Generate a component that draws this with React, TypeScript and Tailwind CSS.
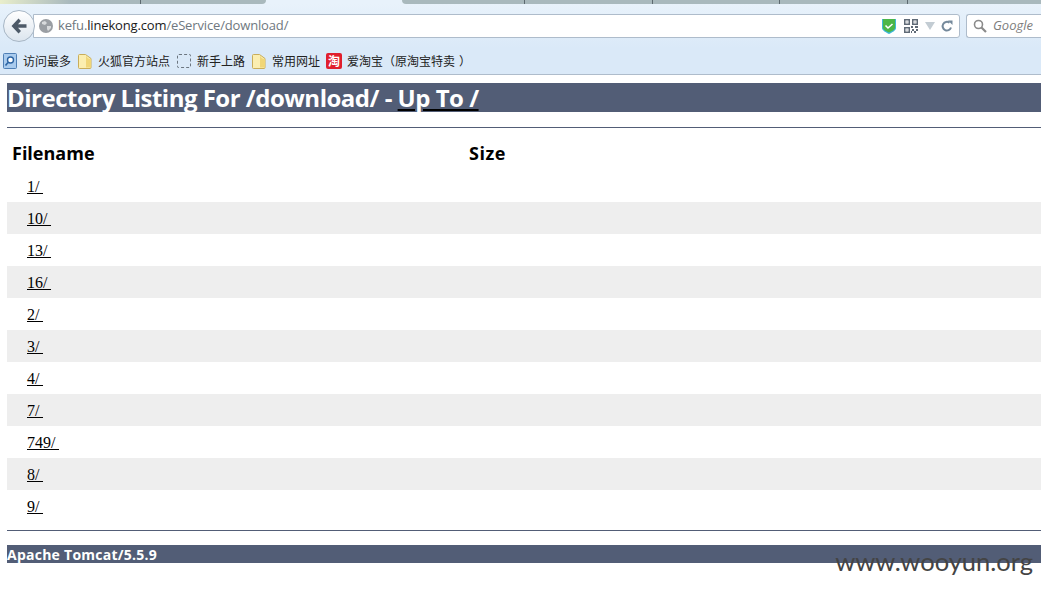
import React from 'react';

const rows = ['1', '10', '13', '16', '2', '3', '4', '7', '749', '8', '9'];

const Folder = () => (
  <svg width="14" height="15" viewBox="0 0 14 15" className="shrink-0">
    <path d="M0.500 1.500a1 1 0 0 1 1-1h6l5.500 4v9a1 1 0 0 1-1 1h-10.500a1 1 0 0 1-1-1z" fill="#fbeeb0" stroke="#c9ad5a" />
    <path d="M8 1.500c1 2.500 2.500 3.500 5 3.500v8.500H8z" fill="#f0d678" />
  </svg>
);

const Globe = () => (
  <svg width="14" height="14" viewBox="0 0 14 14" className="shrink-0">
    <circle cx="7" cy="7" r="7" fill="#9a9ea3" />
    <path d="M3 3l3-1 2 2-2 2-3-1zM8 7l4 0 0 2-3 3-1-2z" fill="#d8dadc" />
  </svg>
);

const Shield = () => (
  <svg width="14" height="15" viewBox="0 0 14 15" className="shrink-0">
    <path d="M0 0h14v9c0 2.500-4 4.500-7 6-3-1.500-7-3.500-7-6z" fill="#3db8d8" />
    <path d="M1 0h12v8.500c0 2.500-3.500 3.500-6 5-2.500-1.500-6-2.500-6-5z" fill="#4cb648" />
    <path d="M3.500 6.500l2.500 2.500 4.500-4" fill="none" stroke="#fff" strokeWidth="1.600" />
  </svg>
);

const QrCode = () => (
  <svg width="14" height="14" viewBox="0 0 14 14" className="shrink-0" fill="#5f6a76">
    <path fillRule="evenodd" d="M0 0h6v6H0zM1.500 1.500v3h3v-3zM8 0h6v6H8zM9.500 1.500v3h3v-3zM0 8h6v6H0zM1.500 9.500v3h3v-3z" />
    <path d="M2.500 2.500h1v1h-1zM10.500 2.500h1v1h-1zM2.500 10.500h1v1h-1zM7 7h2v2H7zM11 7h3v2h-3zM8 10h2v2H8zM12 10h2v2h-2zM10 12h2v2h-2zM7 12h1v2H7z" />
  </svg>
);

const Reload = () => (
  <svg width="12" height="12" viewBox="0 0 12 12" className="shrink-0">
    <path d="M10 7.500A4.300 4.300 0 1 1 8.500 2.700" fill="none" stroke="#75899b" strokeWidth="2" />
    <path d="M7 0.500h4.500v4.500z" fill="#75899b" />
  </svg>
);

const App = () => {
  return (
    <div className="relative w-[1041px] h-[591px] overflow-hidden bg-white font-['Liberation_Serif','Noto_Sans_CJK_SC',serif]">
      {/* browser chrome */}
      <div className="h-[75px] bg-[#dae9f8] border-b border-[#aebccb]">
        <div className="h-[4px] flex bg-[#e8f2fb]">
          <div className="w-[141px] h-full bg-gradient-to-r from-[#e9eecb] to-[#a9b9bd] to-50% border-r border-[#5d6a70]" />
          <div className="w-[125px] h-full bg-[#a9b9bd] rounded-br-[6px]" />
          <div className="w-[136px] h-full" />
          <div className="w-[123px] h-full bg-[#a9b9bd] rounded-bl-[6px] border-r border-[#5d6a70]" />
          <div className="w-[128px] h-full bg-[#a9b9bd] border-r border-[#5d6a70]" />
          <div className="w-[127px] h-full bg-[#a9b9bd] border-r border-[#5d6a70]" />
          <div className="w-[128px] h-full bg-[#a9b9bd] border-r border-[#5d6a70]" />
          <div className="flex-1 h-full bg-[#a9b9bd]" />
        </div>
        <div className="h-[44px] flex items-center pl-[3px] bg-gradient-to-b from-[#e8f2fb] to-[#dae9f8]">
          <div className="flex-1 flex items-center">
            <div className="w-[32px] h-[32px] rounded-full border border-[#a7b6c5] bg-gradient-to-b from-white to-[#dce5ee] flex items-center justify-center shrink-0 z-10">
              <svg width="16" height="16" viewBox="0 0 16 16">
                <path d="M7.500 0.500L0.500 8l7 7.500 2.500-2.500-3-3.200H15.500V6.200H7l3-3.200z" fill="#4d5a68" />
              </svg>
            </div>
            <div className="flex-1 -ml-[2px] h-[24px] bg-white border border-[#aebccb] rounded-r-[3px] flex items-center pl-[5px] pr-[6px] text-[13px] font-['Open_Sans','Noto_Sans',sans-serif] text-[#6f7880]">
              <Globe />
              <span className="ml-[5px] whitespace-nowrap tracking-[-0.15px]">
                kefu.<span className="text-[#1b1b1b]">linekong.com</span>/eService/download/
              </span>
              <div className="ml-auto flex items-center">
                <Shield />
                <div className="ml-[8px]"><QrCode /></div>
                <div className="ml-[7px] w-0 h-0 border-x-[5.500px] border-x-transparent border-t-[8px] border-t-[#c3ccd3]" />
                <div className="ml-[6px]"><Reload /></div>
              </div>
            </div>
          </div>
          <div className="ml-[6px] w-[75px] h-[24px] bg-white border border-r-0 border-[#aebccb] rounded-l-[3px] flex items-center pl-[6px] text-[13px] italic font-['Open_Sans','Noto_Sans',sans-serif] text-[#7d7d7d] overflow-hidden">
            <svg width="14" height="14" viewBox="0 0 14 14" className="shrink-0">
              <circle cx="5.500" cy="5.500" r="4" fill="none" stroke="#8a8a8a" strokeWidth="1.600" />
              <path d="M8.500 8.500l4.500 4.500" stroke="#8a8a8a" strokeWidth="2.200" />
            </svg>
            <span className="ml-[6px] whitespace-nowrap">Google</span>
          </div>
        </div>
        <div className="h-[26px] flex items-center pl-[3px] text-[12px] text-[#222] font-['Noto_Sans_CJK_SC',sans-serif]">
          <svg width="14" height="16" viewBox="0 0 14 16" className="shrink-0">
            <rect x="0.500" y="0.500" width="13" height="15" rx="1" fill="#a9cbee" stroke="#4f7fb5" />
            <circle cx="7.500" cy="7" r="3" fill="#fff" stroke="#2c64a3" strokeWidth="1.400" />
            <path d="M5 9.500l-2.500 3" stroke="#2c64a3" strokeWidth="1.600" />
          </svg>
          <span className="ml-[6px] whitespace-nowrap">访问最多</span>
          <div className="ml-[7px]"><Folder /></div>
          <span className="ml-[6px] whitespace-nowrap">火狐官方站点</span>
          <div className="ml-[7px] w-[14px] h-[14px] border border-dashed border-[#6c7680] rounded-[2px] shrink-0" />
          <span className="ml-[6px] whitespace-nowrap">新手上路</span>
          <div className="ml-[7px]"><Folder /></div>
          <span className="ml-[6px] whitespace-nowrap">常用网址</span>
          <div className="ml-[6px] w-[16px] h-[16px] rounded-[2px] bg-[#e01f2d] text-white text-[12px] font-bold leading-[16px] text-center shrink-0">淘</div>
          <span className="ml-[5px] whitespace-nowrap">
            爱淘宝（原淘宝特卖<span className="ml-[4px]">）</span>
          </span>
        </div>
      </div>

      {/* tomcat listing */}
      <div className="pl-[7px] pt-[8px]">
        <h1 className="h-[29px] bg-[#525d76] text-white text-[24px] tracking-[-0.5px] leading-[29px] font-bold font-['Open_Sans',sans-serif] whitespace-nowrap">
          Directory Listing For /download/ - <a className="text-white underline decoration-black decoration-2 underline-offset-[2px]">Up To /</a>
        </h1>
        <div className="mt-[15px] h-px bg-[#525d76]" />
        <div className="mt-[15px] mb-[7px] h-[20px] flex items-center text-[18px] font-bold text-black font-['Open_Sans',sans-serif]">
          <div className="w-[462px] pl-[5px]">Filename</div>
          <div className="tracking-[0.5px]">Size</div>
        </div>
        <div>
          {rows.map((name, i) => (
            <div key={name} className={`h-[32px] flex items-center pl-[20px] pt-[2px] text-[16px] text-black ${i % 2 === 1 ? 'bg-[#eeeeee]' : ''}`}>
              <a className="underline">{name}<span className="tracking-[3.560px]">/</span></a>
            </div>
          ))}
        </div>
        <div className="mt-[8px] h-px bg-[#525d76]" />
        <div className="mt-[14px] h-[18px] bg-[#525d76] text-white text-[14px] tracking-[0.25px] leading-[20px] font-bold font-['Open_Sans',sans-serif] whitespace-nowrap">
          Apache Tomcat/5.5.9
        </div>
      </div>

      {/* watermark */}
      <div className="absolute right-[8px] top-[544px] text-[25.500px] leading-[34px] text-[#444444] font-['Lato','Open_Sans',sans-serif]">
        www.wooyun.org
      </div>
    </div>
  );
};

export default App;
